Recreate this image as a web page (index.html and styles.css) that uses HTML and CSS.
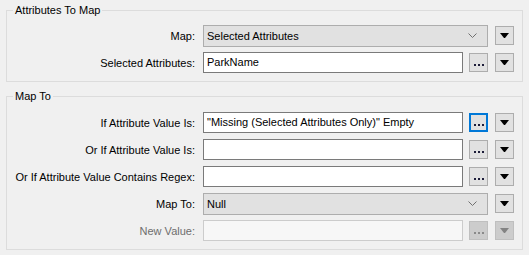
FILE: index.html
```html
<!DOCTYPE html>
<html lang="en">

<head>
    <meta charset="UTF-8">
    <title>Attribute Value Mapper</title>
    <link rel="stylesheet" href="styles.css">
</head>

<body>
    <div class="panel">
        <!-- Which attributes get mapped -->
        <fieldset class="group">
            <legend>Attributes To Map</legend>
            <div class="rows">
                <label class="label">Map:</label>
                <div class="combo">
                    <span>Selected Attributes</span>
                    <svg class="chevron" width="9" height="5" viewBox="0 0 9 5"><polyline points="0.5,0.5 4.5,4.5 8.5,0.5" fill="none" stroke="#707070" stroke-width="1"/></svg>
                </div>
                <button class="arrow"><svg width="9" height="5" viewBox="0 0 9 5"><polygon points="0,0 9,0 5,5 4,5" fill="#000"/></svg></button>

                <label class="label">Selected Attributes:</label>
                <div class="field">ParkName</div>
                <button class="more"><svg width="10" height="2" viewBox="0 0 10 2"><rect x="0" width="2" height="2" fill="#1d1d3a"/><rect x="4" width="2" height="2" fill="#1d1d3a"/><rect x="8" width="2" height="2" fill="#1d1d3a"/></svg></button>
                <button class="arrow"><svg width="9" height="5" viewBox="0 0 9 5"><polygon points="0,0 9,0 5,5 4,5" fill="#000"/></svg></button>
            </div>
        </fieldset>

        <!-- What the matching values become -->
        <fieldset class="group second">
            <legend>Map To</legend>
            <div class="rows">
                <label class="label">If Attribute Value Is:</label>
                <div class="field">"Missing (Selected Attributes Only)" Empty</div>
                <button class="more focused"><svg width="10" height="2" viewBox="0 0 10 2"><rect x="0" width="2" height="2" fill="#1d1d3a"/><rect x="4" width="2" height="2" fill="#1d1d3a"/><rect x="8" width="2" height="2" fill="#1d1d3a"/></svg></button>
                <button class="arrow"><svg width="9" height="5" viewBox="0 0 9 5"><polygon points="0,0 9,0 5,5 4,5" fill="#000"/></svg></button>

                <label class="label">Or If Attribute Value Is:</label>
                <div class="field"></div>
                <button class="more"><svg width="10" height="2" viewBox="0 0 10 2"><rect x="0" width="2" height="2" fill="#1d1d3a"/><rect x="4" width="2" height="2" fill="#1d1d3a"/><rect x="8" width="2" height="2" fill="#1d1d3a"/></svg></button>
                <button class="arrow"><svg width="9" height="5" viewBox="0 0 9 5"><polygon points="0,0 9,0 5,5 4,5" fill="#000"/></svg></button>

                <label class="label">Or If Attribute Value Contains Regex:</label>
                <div class="field"></div>
                <button class="more"><svg width="10" height="2" viewBox="0 0 10 2"><rect x="0" width="2" height="2" fill="#1d1d3a"/><rect x="4" width="2" height="2" fill="#1d1d3a"/><rect x="8" width="2" height="2" fill="#1d1d3a"/></svg></button>
                <button class="arrow"><svg width="9" height="5" viewBox="0 0 9 5"><polygon points="0,0 9,0 5,5 4,5" fill="#000"/></svg></button>

                <label class="label">Map To:</label>
                <div class="combo">
                    <span>Null</span>
                    <svg class="chevron" width="9" height="5" viewBox="0 0 9 5"><polyline points="0.5,0.5 4.5,4.5 8.5,0.5" fill="none" stroke="#707070" stroke-width="1"/></svg>
                </div>
                <button class="arrow"><svg width="9" height="5" viewBox="0 0 9 5"><polygon points="0,0 9,0 5,5 4,5" fill="#000"/></svg></button>

                <label class="label disabled">New Value:</label>
                <div class="field disabled"></div>
                <button class="more disabled"><svg width="10" height="2" viewBox="0 0 10 2"><rect x="0" width="2" height="2" fill="#8a8a8a"/><rect x="4" width="2" height="2" fill="#8a8a8a"/><rect x="8" width="2" height="2" fill="#8a8a8a"/></svg></button>
                <button class="arrow disabled"><svg width="9" height="5" viewBox="0 0 9 5"><polygon points="0,0 9,0 5,5 4,5" fill="#838383"/></svg></button>
            </div>
        </fieldset>
    </div>
</body>

</html>
```

FILE: styles.css
```css
/* Page */
body {
    margin: 0;
    background-color: #f0f0f0;
    font-family: 'Liberation Sans', Arial, sans-serif;
    font-size: 11px;
    color: #000;
}

.panel {
    padding: 2px 6px 0 6px;
}

/* Group boxes */
.group {
    margin: 0;
    padding: 0 8px 8px 0;
    border: 1px solid #dcdcdc;
}

.group legend {
    margin-left: 6px;
    padding: 0 2px;
    line-height: 16px;
}

.second {
    margin-top: 6px;
}

/* Label / field / button rows */
.rows {
    display: grid;
    grid-template-columns: 1fr 260px 25px 26px;
    grid-auto-rows: 21px;
    row-gap: 6px;
    align-items: center;
    margin-top: 7px;
}

.second .rows {
    margin-top: 8px;
}

.label {
    text-align: right;
    padding-right: 8px;
    white-space: nowrap;
}

.label.disabled {
    color: #6d6d6d;
}

/* Text boxes */
.field {
    box-sizing: border-box;
    height: 21px;
    line-height: 19px;
    padding: 0 3px;
    background-color: #fff;
    border: 1px solid #7a7a7a;
    white-space: nowrap;
    overflow: hidden;
}

.field.disabled {
    background-color: #f7f7f7;
    border-color: #cccccc;
}

/* Combo boxes span the field and the "..." column */
.combo {
    grid-column: 2 / span 2;
    box-sizing: border-box;
    height: 22px;
    display: flex;
    align-items: center;
    justify-content: space-between;
    padding: 0 10px 0 3px;
    background-color: #e1e1e1;
    border: 1px solid #adadad;
}

.chevron {
    display: block;
}

/* Small square buttons */
.more,
.arrow {
    justify-self: end;
    box-sizing: border-box;
    width: 19px;
    height: 19px;
    padding: 0;
    margin: 0;
    background-color: #e1e1e1;
    border: 1px solid #adadad;
    display: flex;
    justify-content: center;
}

.more {
    align-items: flex-end;
    padding-bottom: 5px;
}

.arrow {
    align-items: center;
    padding-bottom: 1px;
}

.more.focused {
    border: 2px solid #0078d7;
    padding-bottom: 4px;
}

.more.disabled,
.arrow.disabled {
    background-color: #cccccc;
    border-color: #bfbfbf;
}

.more svg,
.arrow svg {
    display: block;
}
```
